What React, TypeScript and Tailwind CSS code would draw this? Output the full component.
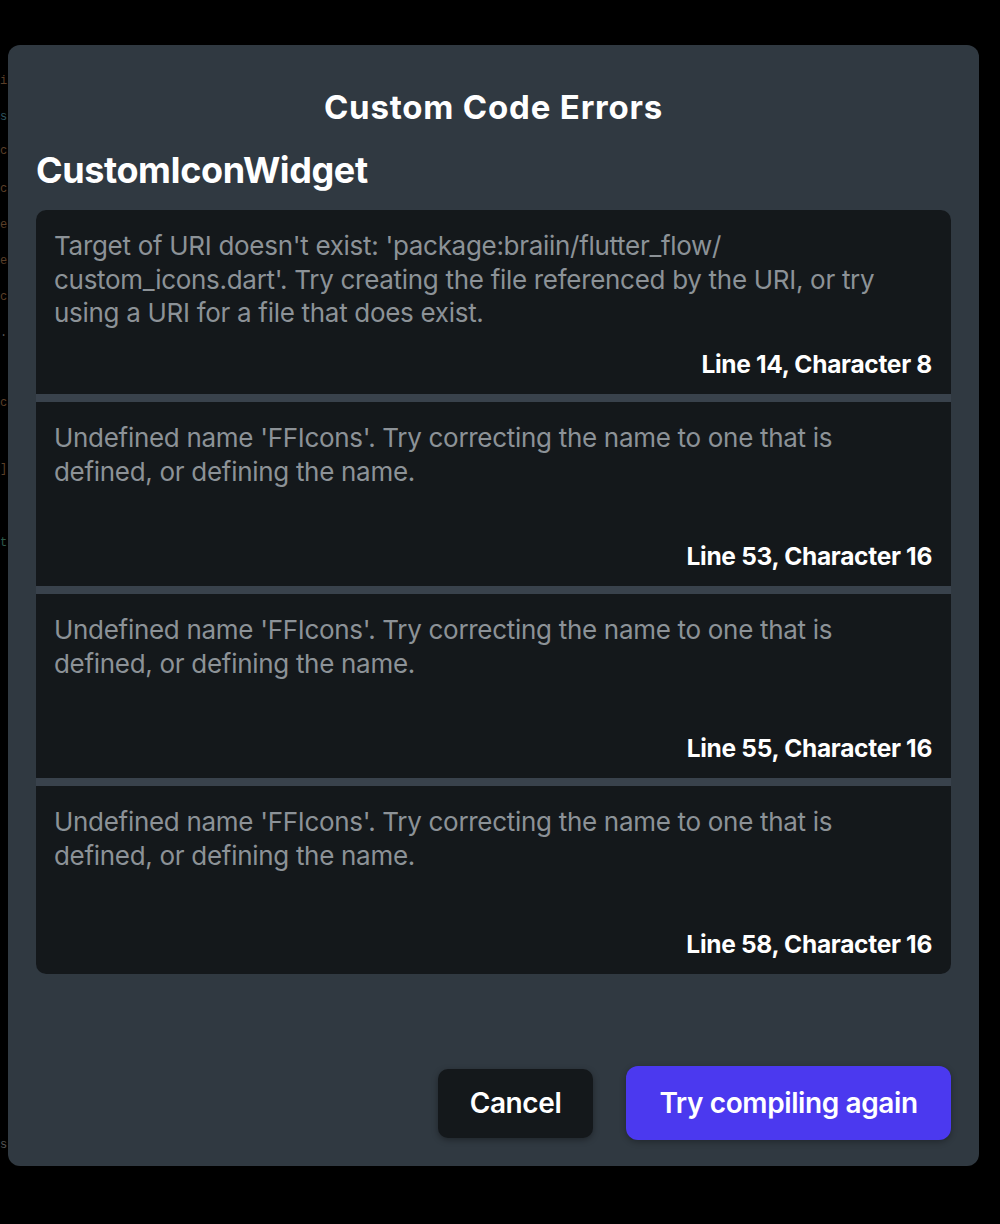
import React from 'react';

interface CodeError {
  message: React.ReactNode;
  location: string;
}

const undefinedName = "Undefined name 'FFIcons'. Try correcting the name to one that is defined, or defining the name.";

const errors: CodeError[] = [
  {
    message: (
      <>
        Target of URI doesn't exist: 'package:braiin/flutter_flow/<wbr />custom_icons.dart'. Try creating the file
        referenced by the URI, or try using a URI for a file that does exist.
      </>
    ),
    location: 'Line 14, Character 8',
  },
  { message: undefinedName, location: 'Line 53, Character 16' },
  { message: undefinedName, location: 'Line 55, Character 16' },
  { message: undefinedName, location: 'Line 58, Character 16' },
];

// faint editor glyphs peeking out behind the dialog
const gutter: { ch: string; top: number; color: string }[] = [
  { ch: 'i', top: 74, color: 'text-[#5a3f28]' },
  { ch: 's', top: 110, color: 'text-[#2f5560]' },
  { ch: 'c', top: 144, color: 'text-[#5a3f28]' },
  { ch: 'c', top: 182, color: 'text-[#5a3f28]' },
  { ch: 'e', top: 218, color: 'text-[#5a3f28]' },
  { ch: 'e', top: 254, color: 'text-[#5a3f28]' },
  { ch: 'c', top: 290, color: 'text-[#5a3f28]' },
  { ch: '.', top: 326, color: 'text-[#555]' },
  { ch: 'c', top: 396, color: 'text-[#5a3f28]' },
  { ch: ']', top: 462, color: 'text-[#5a3f28]' },
  { ch: 't', top: 536, color: 'text-[#2f5a4a]' },
  { ch: 's', top: 1138, color: 'text-[#555]' },
];

const App: React.FC = () => {
  return (
    <div className="w-[1000px] h-[1224px] bg-black relative overflow-hidden" style={{ fontFamily: 'Inter, "Noto Sans", sans-serif' }}>
      {/* editor text behind */}
      {gutter.map((g, i) => (
        <span key={i} className={`absolute left-0 text-[12px] leading-[14px] font-mono ${g.color}`} style={{ top: g.top }}>
          {g.ch}
        </span>
      ))}

      <div className="pt-[45px] pl-[8px]">
        <div className="relative w-[971px] h-[1121px] bg-[#303941] rounded-[12px] px-[28px] pt-[42px] pb-[26px] flex flex-col">
          <h1 className="text-center text-white text-[33px] font-bold leading-[40px] tracking-[0.8px]">
            Custom Code Errors
          </h1>

          <h2 className="mt-[23px] text-white text-[36px] font-bold leading-[40px] tracking-[-0.4px]">
            CustomIconWidget
          </h2>

          {/* ERROR LIST */}
          <div className="mt-[20px] rounded-[10px] overflow-hidden flex flex-col gap-[8px] bg-[#39424c]">
            {errors.map((err, i) => (
              <div
                key={i}
                className={`bg-[#14181b] pl-[18px] pr-[19px] pt-[19px] pb-[14px] flex flex-col justify-between ${i === errors.length - 1 ? 'h-[188px]' : 'h-[184px]'}`}
              >
                <p className="text-[#8c9297] text-[26px] leading-[33.5px] tracking-[-0.3px] pr-[30px]">{err.message}</p>
                <p className="text-right text-white text-[24.5px] font-bold leading-[32px] tracking-[-0.3px]">{err.location}</p>
              </div>
            ))}
          </div>

          {/* ACTIONS */}
          <div className="mt-auto flex items-center justify-end gap-[33px]">
            <button className="w-[155px] h-[69px] bg-[#14181b] rounded-[10px] text-white text-[28px] font-semibold tracking-[-0.4px] shadow-[0_2px_6px_rgba(0,0,0,0.35)]">
              Cancel
            </button>
            <button className="w-[325px] h-[74px] bg-[#4b39ef] rounded-[12px] text-white text-[28px] font-semibold tracking-[-0.4px] shadow-[0_2px_6px_rgba(0,0,0,0.3)]">
              Try compiling again
            </button>
          </div>
        </div>
      </div>
    </div>
  );
};

export default App;
